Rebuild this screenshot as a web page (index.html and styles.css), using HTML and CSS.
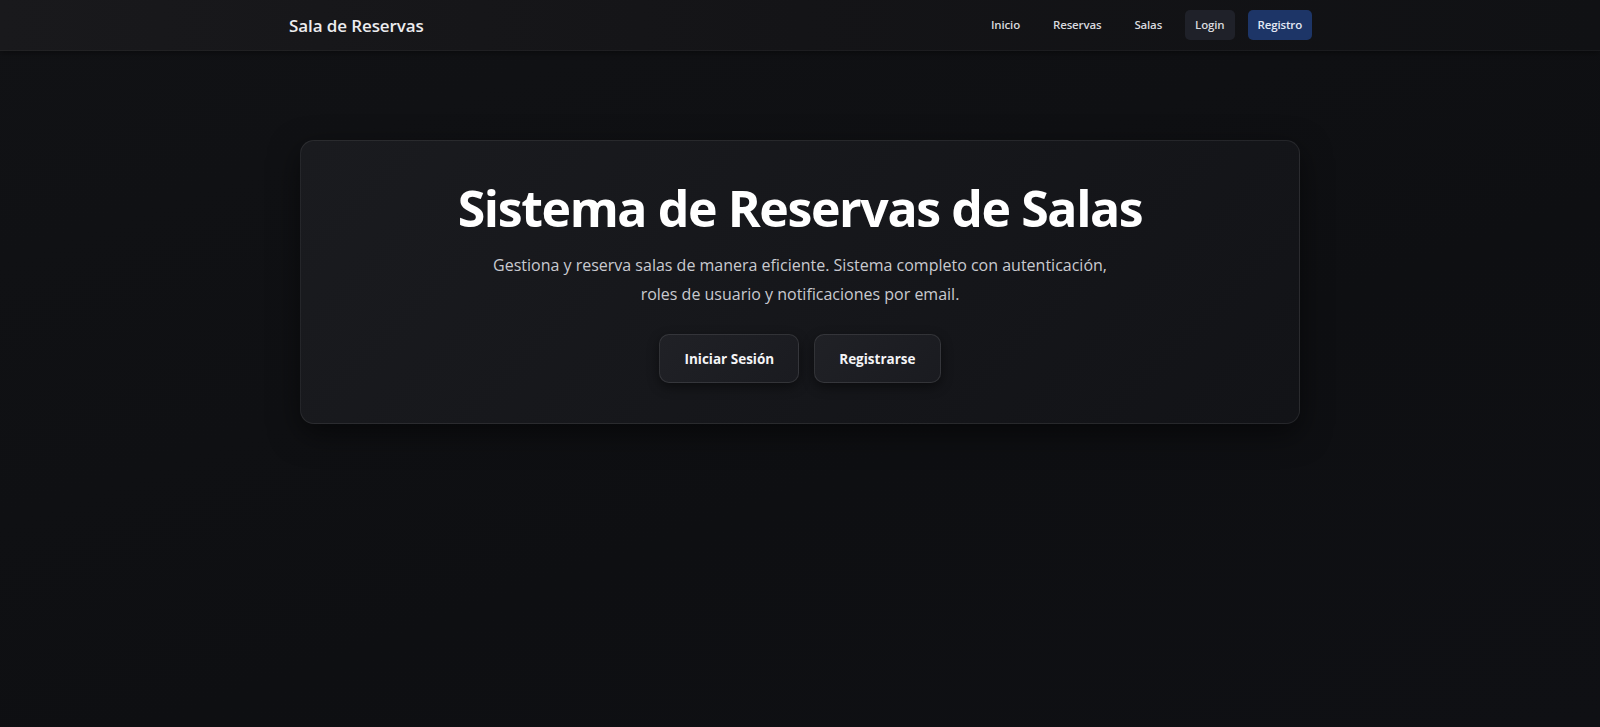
FILE: index.html
```html
<!DOCTYPE html>
<html lang="es">
<head>
<meta charset="utf-8">
<title>Sala de Reservas</title>
<link rel="stylesheet" href="styles.css">
</head>
<body>
<header class="navbar">
  <div class="nav-inner">
    <a class="brand" href="#">Sala de Reservas</a>
    <nav class="nav-links">
      <a class="nav-link" href="#">Inicio</a>
      <a class="nav-link" href="#">Reservas</a>
      <a class="nav-link" href="#">Salas</a>
      <a class="nav-link nav-login" href="#">Login</a>
      <a class="nav-link nav-register" href="#">Registro</a>
    </nav>
  </div>
</header>
<main class="main">
  <section class="hero">
    <h1 class="hero-title">Sistema de Reservas de Salas</h1>
    <p class="hero-text">Gestiona y reserva salas de manera eficiente. Sistema completo con autenticación, roles de usuario y notificaciones por email.</p>
    <div class="hero-actions">
      <a class="btn" href="#">Iniciar Sesión</a>
      <a class="btn" href="#">Registrarse</a>
    </div>
  </section>
</main>
</body>
</html>
```
FILE: styles.css
```css
* { box-sizing: border-box; }
html, body { height: 100%; }
body {
  margin: 0;
  font-family: "Open Sans", "Noto Sans", sans-serif;
  background: linear-gradient(160deg, #111215 0%, #0e0f12 60%, #0f1014 100%);
  color: #f2f3f5;
}
a { text-decoration: none; color: inherit; }

.navbar {
  height: 51px;
  background: linear-gradient(90deg, #19191c 0%, #141417 50%, #101114 100%);
  border-bottom: 1px solid rgba(255,255,255,0.04);
  box-shadow: 0 2px 6px rgba(0,0,0,0.4);
}
.nav-inner {
  max-width: 1024px;
  height: 100%;
  margin: 0 auto;
  display: flex;
  align-items: center;
  justify-content: space-between;
}
.brand {
  font-size: 17px;
  font-weight: 600;
  color: #ececef;
  letter-spacing: -0.1px;
  margin-left: 1px;
}
.nav-links {
  display: flex;
  align-items: center;
  gap: 13px;
  margin-top: -1px;
}
.nav-link {
  font-size: 11.5px;
  font-weight: 600;
  color: #d8d9de;
  padding: 7px 10px;
  border-radius: 5px;
  line-height: 16px;
  letter-spacing: -0.15px;
}
.nav-login { background: #1f2129; }
.nav-register { background: #1d3567; color: #e3e8f4; }

.main {
  padding-top: 89px;
  display: flex;
  justify-content: center;
}
.hero {
  width: 1000px;
  padding: 37px 40px 40px;
  border-radius: 14px;
  border: 1px solid rgba(255,255,255,0.08);
  background: linear-gradient(135deg, #1a1b1f 0%, #16171b 50%, #121317 100%);
  box-shadow: 0 10px 30px rgba(0,0,0,0.5);
  text-align: center;
}
.hero-title {
  margin: 0;
  font-size: 50px;
  font-weight: 700;
  line-height: 1.2;
  color: #ffffff;
  letter-spacing: -1.4px;
}
.hero-text {
  margin: 13px auto 0;
  max-width: 640px;
  font-size: 16px;
  line-height: 29px;
  color: #c9cad0;
}
.hero-actions {
  margin-top: 25px;
  display: flex;
  justify-content: center;
  gap: 15px;
}
.btn {
  display: inline-flex;
  align-items: center;
  height: 49px;
  padding: 0 24px;
  font-size: 13.5px;
  font-weight: 700;
  color: #f4f4f6;
  background: linear-gradient(135deg, #202126 0%, #1a1b20 100%);
  border: 1px solid rgba(255,255,255,0.1);
  border-radius: 10px;
  box-shadow: 0 4px 12px rgba(0,0,0,0.45);
}
```
